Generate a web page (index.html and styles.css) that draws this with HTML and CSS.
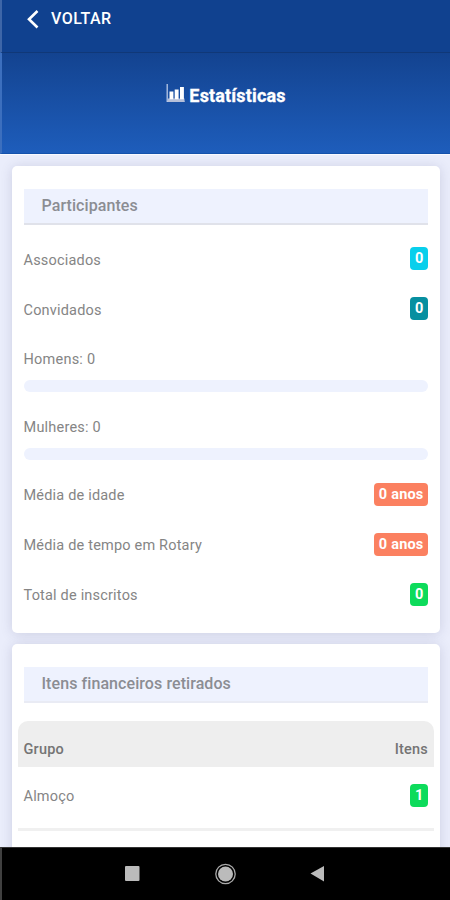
FILE: index.html
```html
<!DOCTYPE html>
<html lang="pt-BR">
<head>
<meta charset="utf-8">
<title>Estatísticas</title>
<link rel="stylesheet" href="styles.css">
</head>
<body>
<div class="screen">
  <header class="topbar">
    <svg class="back" width="14" height="20" viewBox="0 0 14 20"><path d="M11.500 2 3 10.200l8.500 8.300"/></svg>
    <span class="back-label">VOLTAR</span>
  </header>
  <div class="hero">
    <svg class="chart" width="19" height="19" viewBox="0 0 19 19">
      <path class="axis" d="M1.200 0v17.300H18.500"/>
      <path class="base" d="M2 14.500h16.500V18H2z"/>
      <path class="bars" d="M3.500 7.500h3.900v7.800H3.500zM8.700 5.500h3.900v9.800H8.700zM14 3h3.900v12.300H14z"/>
    </svg>
    <h1>Estatísticas</h1>
  </div>
  <main class="content">
    <section class="card first">
      <h2>Participantes</h2>
      <div class="row"><span>Associados</span><b class="badge cyan">0</b></div>
      <div class="row"><span>Convidados</span><b class="badge teal">0</b></div>
      <div class="meter"><span>Homens: 0</span><div class="bar"></div></div>
      <div class="meter"><span>Mulheres: 0</span><div class="bar"></div></div>
      <div class="row"><span>Média de idade</span><b class="badge orange">0 anos</b></div>
      <div class="row"><span>Média de tempo em Rotary</span><b class="badge orange">0 anos</b></div>
      <div class="row"><span>Total de inscritos</span><b class="badge green">0</b></div>
    </section>
    <section class="card second">
      <h2>Itens financeiros retirados</h2>
      <div class="table">
        <div class="thead"><span>Grupo</span><span>Itens</span></div>
        <div class="trow"><span>Almoço</span><b class="badge green">1</b></div>
      </div>
    </section>
  </main>
  <footer class="navbar">
    <svg width="450" height="53" viewBox="0 0 450 53">
      <rect x="125" y="19" width="14.500" height="15" rx="1"/>
      <circle cx="225.500" cy="27" r="7.500"/>
      <circle class="ring" cx="225.500" cy="27" r="9.700"/>
      <path d="M310.500 26.500 324 19v15.500z"/>
    </svg>
  </footer>
</div>
</body>
</html>
```
FILE: styles.css
```css
* { box-sizing: border-box; }
body { margin: 0; font-family: Roboto, sans-serif; color: #858585; }
.screen { width: 450px; height: 900px; overflow: hidden; display: flex; flex-direction: column; }
.topbar { height: 52px; flex: none; background: #10418f; color: #fff; display: flex; align-items: flex-start; padding: 9px 0 0 26px; border-left: 2px solid #3e66a8; }
.back { fill: none; stroke: #fff; stroke-width: 2.600; margin-left: -2px; }
.back-label { font-size: 16px; line-height: 20px; font-weight: 500; letter-spacing: .5px; margin-left: 11px; }
.hero { height: 102px; flex: none; background: linear-gradient(#134390, #1e5dbb); border-top: 1px solid #103878; border-left: 2px solid #3c6fbe; border-bottom: 1px solid #1452ac; display: flex; justify-content: center; padding-top: 31px; gap: 4px; }
.chart { flex: none; }
.axis { fill: none; stroke: #b9c8e6; stroke-width: 1.300; }
.base { fill: #b5bfd9; }
.bars { fill: #fff; }
h1 { margin: 0; color: #fff; font-size: 18px; line-height: 23px; font-weight: 700; letter-spacing: .15px; -webkit-text-stroke: .3px #fff; }
.content { height: 693px; flex: none; overflow: hidden; background: #eaedfb; padding: 10.500px 10px 0 12px; border-top: 1px solid #f8f9ff; }
.card { background: #fff; border-radius: 5px; box-shadow: 0 1px 12px rgba(60, 60, 105, .17); padding: 23px 12px 0 11.500px; }
.first { height: 467.500px; }
.second { height: 240px; margin-top: 11px; }
h2 { margin: 0; height: 36px; padding-left: 18px; background: #eef2fe; border-bottom: 2px solid #e0e2ea; font-size: 16px; line-height: 34px; font-weight: 500; color: #8b8d93; letter-spacing: .08px; }
.first h2 { margin-bottom: 9.500px; }
.second h2 { border-color: #e9ebf4; }
.row, .trow { height: 50px; padding-top: 2px; display: flex; align-items: center; justify-content: space-between; font-size: 14.500px; letter-spacing: .19px; }
.badge { height: 23px; margin-bottom: 3px; padding: 0 4.500px; border-radius: 4px; color: #fff; font-size: 14.500px; line-height: 23px; font-weight: 700; letter-spacing: .2px; }
.cyan { background: #08cfec; }
.teal { background: #078fa0; }
.orange { background: #fb8060; }
.green { background: #0ddb5b; }
.meter { height: 67.750px; padding-top: 16px; font-size: 14.500px; line-height: 20px; letter-spacing: .22px; }
.bar { height: 12px; margin-top: 10px; border-radius: 6px; background: #eef2fe; }
.table { margin: 18px -6px 0; }
.thead { height: 46px; background: #eee; border-radius: 10px 10px 0 0; padding: 19px 6px 0; display: flex; justify-content: space-between; font-size: 14.500px; line-height: 20px; font-weight: 500; color: #747474; letter-spacing: .2px; }
.trow { height: 64px; padding: 0 6px 2px; border-bottom: 3px solid #f0f0f0; }
.navbar { height: 53px; flex: none; background: #000; border-left: 2px solid #404040; border-top: 1px solid #333; }
.navbar svg { display: block; margin: -1px 0 0 -2px; fill: #bbb; }
.navbar .ring { fill: none; stroke: #aaa; stroke-width: 1.300; }
```
